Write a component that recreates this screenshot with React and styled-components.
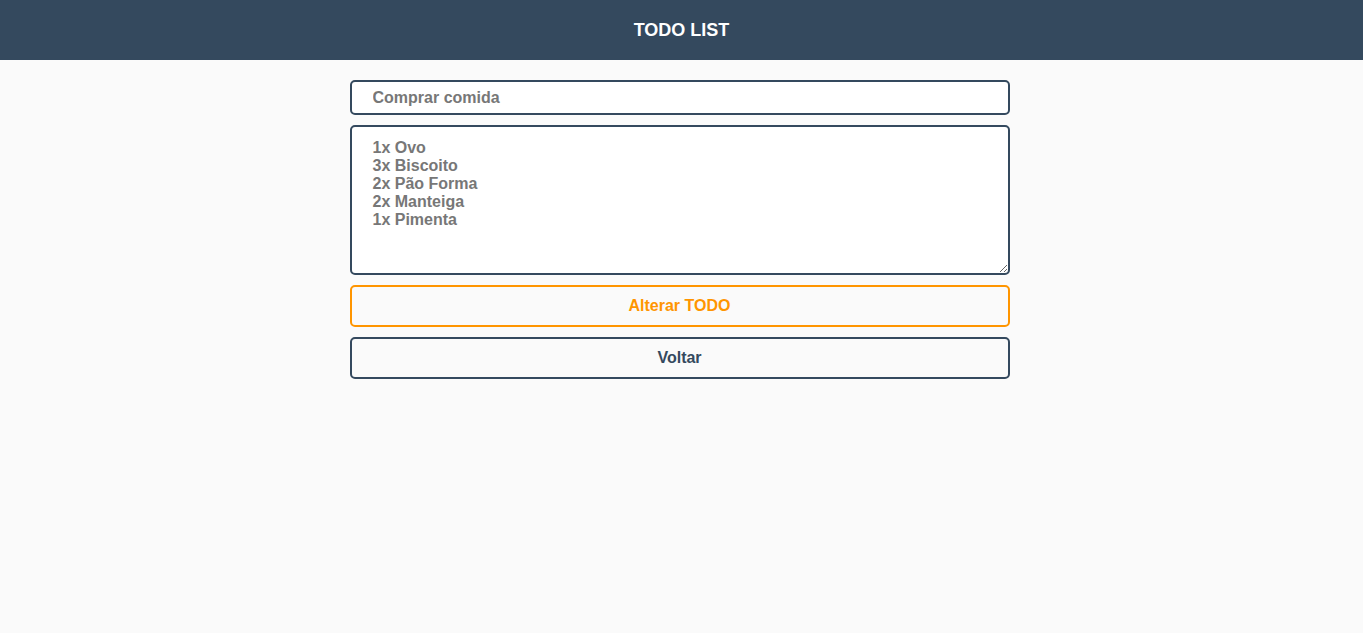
import styled, { createGlobalStyle } from "styled-components";

const GlobalStyle = createGlobalStyle`
    body {
        margin: 0;
        background: #fafafa;
        font-family: "Liberation Sans", Arial, sans-serif;
    }
`;

const Header = styled.header`
    height: 60px;
    background-color: #34495e;
    display: flex;
    align-items: center;
    justify-content: center;
`;

const Title = styled.h1`
    margin: 1px 0 0;
    color: #fff;
    font-size: 18px;
    font-weight: bold;
`;

const Form = styled.form`
    width: 660px;
    margin: 20px auto 0;
    display: flex;
    flex-direction: column;
    gap: 10px;
    position: relative;
    left: -2px;
`;

const Input = styled.input`
    box-sizing: border-box;
    height: 35px;
    padding: 0 21px;
    border: 2px solid #34495e;
    border-radius: 5px;
    background: #fff;
    font-family: inherit;
    font-size: 16px;
    font-weight: bold;
    color: #777;
    outline: none;
`;

const TextArea = styled.textarea`
    box-sizing: border-box;
    height: 150px;
    padding: 12px 21px;
    border: 2px solid #34495e;
    border-radius: 5px;
    background: #fff;
    font-family: inherit;
    font-size: 16px;
    line-height: 18px;
    font-weight: bold;
    color: #777;
    outline: none;
`;

const Button = styled.button`
    box-sizing: border-box;
    height: 42px;
    border: 2px solid ${(p) => p.color};
    border-radius: 5px;
    background: transparent;
    color: ${(p) => p.color};
    font-family: inherit;
    font-size: 16px;
    font-weight: bold;
    cursor: pointer;
`;

function App() {
    return (
        <>
            <GlobalStyle />
            <Header>
                <Title>TODO LIST</Title>
            </Header>
            <Form onSubmit={(e) => e.preventDefault()}>
                <Input defaultValue="Comprar comida" />
                <TextArea
                    defaultValue={"1x Ovo\n3x Biscoito\n2x Pão Forma\n2x Manteiga\n1x Pimenta"}
                />
                <Button color="#ff9500">Alterar TODO</Button>
                <Button type="button" color="#34495e">Voltar</Button>
            </Form>
        </>
    );
}

export default App;
